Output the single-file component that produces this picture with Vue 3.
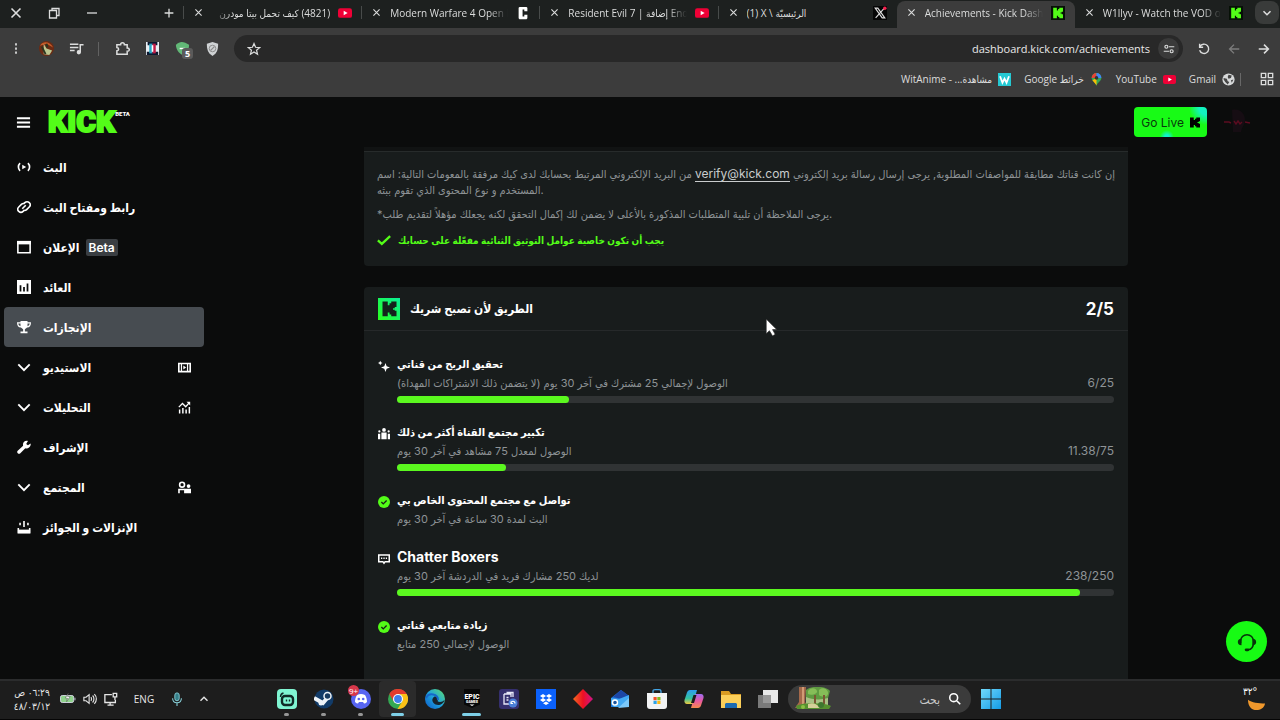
<template>
  <div class="desktop">
    <header class="browser">
      <div class="tab-strip">
        <div class="window-controls">
          <button v-for="c in windowControls" :key="c.icon" type="button" :aria-label="c.label">
            <svg viewBox="0 0 16 16" v-html="icons[c.icon]"></svg>
          </button>
        </div>
        <button class="new-tab" type="button" aria-label="New tab">
          <svg viewBox="0 0 16 16" v-html="icons.plus"></svg>
        </button>
        <div class="tabs">
          <div v-for="tab in tabs" :key="tab.title" class="tab" :class="{ active: tab.active }">
            <button type="button" class="tab-close" aria-label="Close tab">
              <svg viewBox="0 0 16 16" v-html="icons.close"></svg>
            </button>
            <span class="tab-title" :class="{ fade: tab.fade }" :dir="tab.dir">{{ tab.title }}</span>
            <svg class="favicon" viewBox="0 0 16 16" v-html="icons[tab.icon]"></svg>
          </div>
        </div>
        <button class="tab-search" type="button" aria-label="Search tabs">
          <svg viewBox="0 0 16 16" v-html="icons.chevronDown"></svg>
        </button>
      </div>

      <div class="toolbar">
        <div class="extensions">
          <button v-for="e in extensions" :key="e" type="button" :class="e" :aria-label="e">
            <svg viewBox="0 0 16 16" v-html="icons[e]"></svg>
            <span v-if="e === 'guard'" class="count">5</span>
          </button>
        </div>
        <div class="omnibox">
          <button type="button" aria-label="Bookmark">
            <svg viewBox="0 0 16 16" v-html="icons.star"></svg>
          </button>
          <input type="text" aria-label="Address" value="dashboard.kick.com/achievements" />
          <button type="button" class="site-info" aria-label="Site information">
            <svg viewBox="0 0 16 16" v-html="icons.tune"></svg>
          </button>
        </div>
        <div class="history">
          <button type="button" aria-label="Reload"><svg viewBox="0 0 16 16" v-html="icons.reload"></svg></button>
          <button type="button" aria-label="Forward" disabled><svg viewBox="0 0 16 16" v-html="icons.arrowLeft"></svg></button>
          <button type="button" aria-label="Back"><svg viewBox="0 0 16 16" v-html="icons.arrowRight"></svg></button>
        </div>
      </div>

      <nav class="bookmarks">
        <a v-for="b in bookmarks" :key="b.label" href="#">
          <span>{{ b.label }}</span>
          <svg viewBox="0 0 16 16" v-html="icons[b.icon]"></svg>
        </a>
        <button type="button" aria-label="Apps"><svg viewBox="0 0 16 16" v-html="icons.apps"></svg></button>
      </nav>
    </header>

    <div class="page">
      <header class="page-header">
        <button class="menu" type="button" aria-label="Menu">
          <svg viewBox="0 0 16 16" v-html="icons.menu"></svg>
        </button>
        <a class="logo" href="#">KICK<sup>BETA</sup></a>
        <button class="go-live" type="button">
          Go Live
          <svg viewBox="0 0 8 8"><path :d="kMark" /></svg>
        </button>
        <a class="avatar" href="#" aria-label="Profile">
          <svg viewBox="0 0 28 28">
            <path d="M9 2c7-2 13 3 13 10 0 5-3 6-4 12h-8z" fill="#160d13" />
            <path d="M1 14h5l2 1M11 13l2 3 2-3 2 3 2-2M22 14l5 1" fill="none" stroke="#5c0c20" stroke-width="1.4" />
          </svg>
        </a>
      </header>

      <div class="body">
        <nav class="sidebar">
          <a v-for="item in navItems" :key="item.label" href="#" :class="{ active: item.active }">
            <svg viewBox="0 0 16 16" v-html="icons[item.icon]"></svg>
            <span class="nav-label" dir="rtl">{{ item.label }}</span>
            <span v-if="item.badge" class="nav-badge">{{ item.badge }}</span>
            <svg v-if="item.trail" class="trail" viewBox="0 0 16 16" v-html="icons[item.trail]"></svg>
          </a>
        </nav>

        <main class="content">
          <section class="card notice">
            <p class="line" dir="rtl">
              إن كانت قناتك مطابقة للمواصفات المطلوبة, يرجى إرسال رسالة بريد إلكتروني
              <a href="mailto:verify@kick.com">verify@kick.com</a>
              من البريد الإلكتروني المرتبط بحسابك لدى كيك مرفقة بالمعومات التالية: اسم
            </p>
            <p class="line">المستخدم و نوع المحتوى الذي تقوم ببثه.</p>
            <p class="line hint">*يرجى الملاحظة أن تلبية المتطلبات المذكورة بالأعلى لا يضمن لك إكمال التحقق لكنه يجعلك مؤهلاً لتقديم طلب.</p>
            <p class="check">
              <svg viewBox="0 0 16 16" v-html="icons.check"></svg>
              <span>يجب أن تكون خاصية عوامل التوثيق الثنائية مفعّلة على حسابك</span>
            </p>
          </section>

          <section class="card">
            <header class="card-header">
              <svg viewBox="0 0 22 22">
                <defs>
                  <linearGradient id="partner" x1="0" y1="1" x2="1" y2="0">
                    <stop offset="0" stop-color="#2bff1c" />
                    <stop offset="1" stop-color="#08f09a" />
                  </linearGradient>
                </defs>
                <rect width="22" height="22" fill="url(#partner)" />
                <path :d="kMark" transform="translate(4.5 3.5) scale(1.75 1.85)" fill="#14221b" />
              </svg>
              <h2>الطريق لأن تصبح شريك</h2>
              <strong>2/5</strong>
            </header>
            <ul class="goals">
              <li v-for="goal in goals" :key="goal.title">
                <svg viewBox="0 0 16 16" v-html="icons[goal.icon]"></svg>
                <div class="goal">
                  <h3 :class="{ latin: goal.latin }">{{ goal.title }}</h3>
                  <div class="goal-row">
                    <p dir="rtl">{{ goal.text }}</p>
                    <span v-if="goal.max" class="score">{{ goal.value }}/{{ goal.max }}</span>
                  </div>
                  <div
                    v-if="goal.max"
                    class="bar"
                    role="progressbar"
                    :aria-label="goal.title"
                    :aria-valuenow="goal.value"
                    :aria-valuemax="goal.max"
                  >
                    <div class="fill" :style="{ width: percent(goal) }"></div>
                  </div>
                </div>
              </li>
            </ul>
          </section>
        </main>
      </div>

      <button class="support" type="button" aria-label="Support">
        <svg viewBox="0 0 24 24">
          <path d="M5 13v-2a7 7 0 0 1 14 0v2c0 5-2 7-6 7.500" fill="none" stroke="#06330a" stroke-width="1.700" />
          <path d="M6 8.500v7c-3 0-4-1.500-4-3.500s1-3.500 4-3.500zM18 8.500v7c3 0 4-1.500 4-3.500s-1-3.500-4-3.500z" fill="#06330a" />
          <rect x="9.500" y="19" width="5" height="3" rx="1.500" fill="#06330a" />
        </svg>
      </button>
    </div>

    <footer class="taskbar">
      <div class="tray">
        <time dir="rtl"><span>٠٦:٢٩ ص</span><span>٤٨/٠٣/١٢</span></time>
        <svg class="battery" viewBox="0 0 18 16" v-html="icons.battery"></svg>
        <svg viewBox="0 0 16 16" v-html="icons.volume"></svg>
        <svg viewBox="0 0 16 16" v-html="icons.network"></svg>
        <button class="lang" type="button">ENG</button>
        <svg viewBox="0 0 16 16" v-html="icons.mic"></svg>
        <button class="more" type="button" aria-label="Hidden icons">
          <svg viewBox="0 0 16 16" v-html="icons.chevronUp"></svg>
        </button>
      </div>
      <div class="apps">
        <button v-for="app in apps" :key="app.icon" type="button" :class="app.state" :aria-label="app.icon">
          <svg viewBox="0 0 20 20" v-html="icons[app.icon]"></svg>
          <span v-if="app.badge" class="app-badge">{{ app.badge }}</span>
        </button>
      </div>
      <label class="search">
        <svg class="scene" viewBox="0 0 38 24" v-html="icons.forest"></svg>
        <input type="text" placeholder="بحث" dir="rtl" aria-label="بحث" />
        <svg class="lens" viewBox="0 0 16 16" v-html="icons.search"></svg>
      </label>
      <button class="start" type="button" aria-label="Start">
        <svg viewBox="0 0 20 20" v-html="icons.windows"></svg>
      </button>
      <div class="weather">
        <span>٣٢°</span>
        <svg viewBox="0 0 20 20">
          <path d="M1 7c4 3 11 4 18 4-1 5-5 7-9 7-5 0-9-4-9-11z" fill="#f0982c" />
        </svg>
      </div>
    </footer>

    <svg class="cursor" viewBox="0 0 12 18">
      <path d="M1 1v14l3-3 3 5 2.500-1.500L7 11h4z" fill="#fff" stroke="#222" stroke-width=".6" />
    </svg>
  </div>
</template>

<script setup>
const kMark = 'M0 0h3v2h1V1h1V0h3v3H7v.6H6v.8h1V5h1v3H5V7H4V6H3v2H0z'

const line = (d, w = 1.4) => `<path d="${d}" fill="none" stroke="currentColor" stroke-width="${w}"/>`
const solid = (d) => `<path d="${d}" fill="currentColor" fill-rule="evenodd"/>`
const kick = `<rect width="16" height="16" fill="#061006"/><path d="${kMark}" transform="translate(2.500 2) scale(1.4 1.5)" fill="#53fc18"/>`

const icons = {
  close: line('M3.500 3.500l9 9M12.500 3.500l-9 9', 1.6),
  restore: line('M3.500 5.500h7V13h-7zM6 5.500V3.500h7V10.500h-2.500', 1.3),
  minimize: line('M3 8h10', 1.3),
  plus: line('M8 3v10M3 8h10', 1.5),
  chevronDown: line('M4 6l4 4 4-4', 1.8),
  chevronUp: line('M4 10l4-4 4 4', 1.6),
  youtube: '<rect y="2.500" width="16" height="11" rx="2.500" fill="#ef0036"/><path d="M6.500 5.500v5L11 8z" fill="#fff"/>',
  cod: '<path d="M4 1h8l1 1v4H9.500V4h-2v8h2v-2H13v4l-1 1H4l-1-1V2z" fill="#fff"/>',
  x: '<rect width="16" height="16" rx="1" fill="#050505"/><path d="M2.500 2.500h3l8 11h-3zM13 2.500l-10 11" fill="none" stroke="#ddd" stroke-width="1.300"/><circle cx="13.500" cy="2.500" r="2" fill="#f4214e"/>',
  kick,
  kebab: solid('M7 2h2v2.500H7zM7 6.800h2v2.500H7zM7 11.500h2V14H7z'),
  profile:
    '<circle cx="8" cy="8" r="8" fill="#6b2b14"/><path d="M1 5c4-6 11-4 14 2L8 3z" fill="#c65b28"/><path d="M5 3l3 5 6 2-3 5-6-1z" fill="#bcc68f"/><path d="M3 6l4 8M8 3l1 4" stroke="#2a3520" stroke-width="2"/>',
  playlist: line('M1 3.500h9M1 6.800h9M1 10h5M12 12V4h3.500', 1.6) + solid('M12.800 12a2.300 2.300 0 1 1-4.600 0 2.300 2.300 0 0 1 4.600 0z'),
  puzzle: line('M2 4h4c0-3 4-3 4 0h3v3.500c3 0 3 3.500 0 3.500v3H2v-3.500c2.500-.5 2.500-3 0-3.500z', 1.6),
  frame:
    '<rect width="16" height="16" fill="#e9eff4"/><path d="M2 0h12v4H2zM1 12h14v4H1z" fill="#0c1830"/><rect x="4" y="2" width="4" height="12" fill="#2aa6c4"/><rect x="8" y="2" width="4" height="12" fill="#c01b46"/><path d="M7 4h2v8H7z" fill="#fff"/>',
  guard: '<path d="M1 4c5-5 9-3 14 0 0 6-3 9-7 11-4-2-7-6-7-11z" fill="#62b877"/><path d="M5 8h6" stroke="#fff" stroke-width="1.500"/>',
  shield:
    '<path d="M2 3l6-2 6 2c0 6-1 10-6 13-5-3-6-7-6-13z" fill="#cfd2d4"/><circle cx="8" cy="8" r="3.500" fill="none" stroke="#888"/><path d="M6 10l4-4" stroke="#888" stroke-width="1.300"/>',
  star: line('M8 1.800l1.800 4.200 4.600.4-3.500 3 1.100 4.500L8 11.500l-4 2.400 1.100-4.500-3.500-3 4.600-.4z', 1.4),
  tune: line('M8 5h7M1 11h7', 1.6) + line('M6.500 5a2 2 0 1 1-4 0 2 2 0 0 1 4 0zM13.500 11a2 2 0 1 1-4 0 2 2 0 0 1 4 0z', 1.6),
  reload: line('M3.500 5A5.300 5.300 0 1 1 3 9.500M3 2v4h4', 1.6),
  arrowLeft: line('M14 8H3M8 3L3 8l5 5', 1.6),
  arrowRight: line('M2 8h11M8 3l5 5-5 5', 1.8),
  wit: '<rect width="16" height="16" fill="#25c9d3"/><path d="M2.500 4l3 8L8 7l2.500 5 3-8" fill="none" stroke="#fff" stroke-width="2.200"/>',
  maps:
    '<path d="M8 16C7 11 2 10 2 6a6 6 0 0 1 12 0c0 4-5 5-6 10z" fill="#34a853"/><path d="M2 6a6 6 0 0 1 6-6v6z" fill="#ea4335"/><path d="M8 0a6 6 0 0 1 6 6H8z" fill="#4285f4"/><path d="M3 9l5-3v9z" fill="#fbbc04"/><circle cx="8" cy="6" r="2.200" fill="#333"/>',
  globe: '<circle cx="8" cy="8" r="7.500" fill="#d7d9da"/><path d="M2 6l4 1 1 3 2 1-2 3-3-3-2-3zM8 2l4 1-1 3-3 1-1-2zM11 9l3-1-2 4z" fill="#454545"/>',
  apps: line('M1.500 1.500h5v5h-5zM9.500 1.500h5v5h-5zM1.500 9.500h5v5h-5zM9.500 9.500h5v5h-5z', 1.5),
  menu: line('M1 3.500h14M1 8h14M1 12.500h14', 2.2),
  stream: line('M3.500 3.500C1 6 1 10 3.500 12.500M12.500 3.500c2.500 2.500 2.500 6.500 0 9', 1.9) + solid('M6 5.500l4.500 2.500L6 10.500z'),
  link: line('M7.500 4.500L9 3a3.400 3.400 0 0 1 5 5l-3 3a3.400 3.400 0 0 1-3.500.8M8.500 11.500L7 13a3.400 3.400 0 0 1-5-5l3-3a3.400 3.400 0 0 1 3.500-.8M6 10l4-4', 1.8),
  ad: line('M1 2h14v12.500H1z', 1.8) + solid('M0 1h16v4H0z'),
  revenue: solid('M0 0h16v16H0zM3 6v7h2V6zM7 8v5h2V8zM11 4v9h2V4z'),
  trophy: solid('M4 1h8v1.500h4c0 4-1.500 6-4.500 6L9 10.500V13h3v2H4v-2h3v-2.500L4.500 8.500C1.500 8.500 0 6.500 0 2.500h4zM1.500 4c.2 1.600 1 2.600 2.500 3V4zM12 4v3c1.500-.4 2.300-1.400 2.500-3z'),
  chevron: line('M1.500 5L8 11.500 14.500 5', 2.2),
  studio: solid('M0 2h16v12H0zM2 4v8h1.500V4zM12.500 4v8H14V4zM5 4v8h6V4z') + solid('M6.500 5.500v5L10 8z'),
  analytics: line('M2 15.500v-5M6 15.500v-7M10 15.500v-5M14 15.500v-8', 1.8) + line('M1 7.500L5.500 3l4 4L14 2', 1.6) + solid('M10.500 1H15v4.500z'),
  wrench: solid('M15.500 4l-3 2-2-1.500L12.500 1C9 0 6 3 7 6.500L.5 12.500c-1 2 1 4 3 3L9.500 9.500c3 1 7-2 6-5.500z'),
  community: line('M8 4.500a3 3 0 1 1-6 0 3 3 0 0 1 6 0zM1.200 15V10.500H8', 2) + solid('M13 4a2.300 2.300 0 1 1 0 4.600A2.300 2.300 0 0 1 13 4zM7.500 9.500H16V15H7.500z'),
  drops: line('M1.500 9v5.500h13V9M8 1v7M3.500 3v3M12.500 3v3', 1.8) + solid('M1 11h14v4H1z'),
  check: '<path d="M1 8.500l4.500 4L15 3.500" fill="none" stroke="#53fc18" stroke-width="2.600"/>',
  sparkle: solid('M10 4l1.500 4.200L16 10l-4.500 1.800L10 16l-1.600-4.200L4 10l4.400-1.800zM3 1l1 2 2 1-2 1-1 2-1-2-2-1 2-1z'),
  group: solid('M8 0a2.500 2.500 0 1 1 0 5 2.500 2.500 0 0 1 0-5zM4.500 6h7v9h-7zM0 7.500h3V15H0zM13 7.500h3V15h-3zM1.800 3a1.500 1.500 0 1 1 0 3 1.500 1.500 0 0 1 0-3zM14.200 3a1.500 1.500 0 1 1 0 3 1.500 1.500 0 0 1 0-3z'),
  done: '<circle cx="8" cy="8" r="8" fill="#53fc18"/><path d="M4.500 8l2.500 2.500 4.500-4.500" fill="none" stroke="#182018" stroke-width="1.800"/>',
  chat: line('M1 2.500h14v9H9.500L8 13.500l-1.500-2H1z', 2) + solid('M4 6h1.700v2H4zM7.200 6h1.700v2H7.200zM10.400 6H12v2h-1.600z'),
  battery:
    '<rect x="1" y="4" width="15" height="8" rx="2" fill="#8fd18c" stroke="#dde" /><path d="M17.500 6.500v3" stroke="#dde"/><path d="M10 1L6.500 7H9l-1 4 4-6H9z" fill="#fff" stroke="#333" stroke-width=".5"/>',
  volume: line('M1 6h2.500L7 3v10l-3.500-3H1zM9 6c1 1 1 3 0 4M11 4c2 2 2 6 0 8M13 2.500c3 3 3 8 0 11', 1.3),
  network: line('M9 3H1v9h12V9M4 15h7M7 12v3M10.500 1.500h4v4h-4zM12.500 5.500V9', 1.5),
  mic: '<rect x="5.500" y="1" width="5" height="9" rx="2.500" fill="#357f89" stroke="#8ad3dc"/><path d="M3 7c0 7 10 7 10 0M8 12.500V16" fill="none" stroke="#8ad3dc" stroke-width="1.200"/>',
  search: line('M11 6.500a4.500 4.500 0 1 1-9 0 4.500 4.500 0 0 1 9 0zM9.700 9.700L14 14', 1.8),
  streamlabs:
    '<rect width="20" height="20" rx="4" fill="#80f5d2"/><rect x="5" y="7" width="11" height="9" rx="3" fill="none" stroke="#102a26" stroke-width="2.400"/><path d="M9.500 10.500v2M12.500 10.500v2M3.500 8c0-2 1-3.500 3-4" stroke="#102a26" stroke-width="1.400" fill="none"/>',
  steam:
    '<circle cx="10" cy="10" r="9.500" fill="#123b68"/><path d="M0 9l9 5 5-6" fill="none" stroke="#eef3f8" stroke-width="4"/><circle cx="13.500" cy="7" r="3.500" fill="#173a60" stroke="#eef3f8" stroke-width="1.500"/><circle cx="7" cy="14" r="2.500" fill="#eef3f8"/>',
  discord:
    '<circle cx="10" cy="10" r="10" fill="#5865f2"/><path d="M6 6c3-1.200 5-1.200 8 0 1.500 2.500 2 4.500 2 7-1 1-2 1.500-3 1.500l-1-1.500H8l-1 1.500c-1 0-2-.5-3-1.500 0-2.500.5-4.500 2-7z" fill="#fff"/><circle cx="7.800" cy="10" r="1.300" fill="#5865f2"/><circle cx="12.200" cy="10" r="1.300" fill="#5865f2"/>',
  chrome:
    '<circle cx="10" cy="10" r="10" fill="#34a853"/><path d="M1.300 5A10 10 0 0 1 18.700 5H10L5.700 12.500z" fill="#e33b2e"/><path d="M18.700 5A10 10 0 0 1 9.500 20l5-8L12 5z" fill="#fbc116"/><circle cx="10" cy="10" r="5" fill="#fff"/><circle cx="10" cy="10" r="3.900" fill="#3f7fee"/>',
  edge:
    '<defs><linearGradient id="eg" x1="0" y1="1" x2="1" y2="0"><stop stop-color="#0c59c8"/><stop offset=".5" stop-color="#1fa3dd"/><stop offset="1" stop-color="#5fe06a"/></linearGradient></defs><circle cx="10" cy="10" r="10" fill="url(#eg)"/><path d="M8 9c2-3 6-1 5 2-1 1 0 2 2 2 2 0 3-1 4.500-2C18 17 11 17 8.500 14 7 12 7 10 8 9z" fill="#17242e"/><path d="M1 9c3-6 12-4 12 2" fill="none" stroke="#1667c9" stroke-width="2"/>',
  epic:
    '<path d="M2 0h16v15.500L10 19l-8-3.500z" fill="#080808"/><text x="10" y="9.500" text-anchor="middle" font-family="Roboto, sans-serif" font-weight="900" font-size="7" fill="#fff">EPIC</text><text x="10" y="13.500" text-anchor="middle" font-family="Roboto, sans-serif" font-weight="900" font-size="3.500" fill="#fff">GAMES</text><path d="M7.500 15.500h5L10 17z" fill="#fff"/>',
  transfer:
    '<rect width="20" height="20" rx="3" fill="#352f6e"/><path d="M5 5h7v3M5 5v10h6M7.500 3.500H14V8M7.500 8.500h2M7.500 11h2" fill="none" stroke="#e8e8f8" stroke-width="1.300"/><circle cx="14" cy="14" r="4.500" fill="#4b7fd8"/><path d="M12 14.500c0-3 4-3 4 0M12 12.500v2h2" fill="none" stroke="#fff" stroke-width="1.100"/>',
  dropbox:
    '<rect width="20" height="20" fill="#0b61fb"/><path d="M7 5l3 2-3 2-3-2zM13 5l3 2-3 2-3-2zM7 9l3 2-3 2-3-2zM13 9l3 2-3 2-3-2zM10 12.500l3 1.700-3 1.800-3-1.800z" fill="#fff"/>',
  diamond:
    '<defs><linearGradient id="dm"><stop stop-color="#f26a21"/><stop offset=".5" stop-color="#ed1022"/><stop offset="1" stop-color="#d01488"/></linearGradient></defs><path d="M10 0l10 10-10 10L0 10z" fill="url(#dm)"/>',
  home:
    '<path d="M1 9L11 1l8 6v11H1z" fill="#1e73d8"/><path d="M3 8l8-7 8 6-7 3z" fill="#1c46a6"/><path d="M1 9l8 1 10-4v12H4l-3-3z" fill="#42a9f4"/><path d="M8 19L19 9v9z" fill="#7cc9fb"/><circle cx="5" cy="13.500" r="2.500" fill="#1b559f" stroke="#fff" stroke-width="1.400"/>',
  store:
    '<path d="M6 4V2.500C6 1 6.500.7 8 .7h4c1.500 0 2 .3 2 1.800V4" fill="none" stroke="#43a5e6" stroke-width="1.300"/><path d="M0 4h20v13a3 3 0 0 1-3 3H3a3 3 0 0 1-3-3z" fill="#f2f3f4"/><path d="M6.500 8h3.200v3.200H6.500z" fill="#f05128"/><path d="M10.300 8h3.200v3.200h-3.200z" fill="#7eb91b"/><path d="M6.500 11.800h3.200V15H6.500z" fill="#2ba2e8"/><path d="M10.300 11.800h3.200V15h-3.200z" fill="#fbb813"/>',
  copilot:
    '<defs><linearGradient id="ca" x1="0" y1="0" x2="0" y2="1"><stop stop-color="#2d9cf0"/><stop offset=".6" stop-color="#33c3a0"/><stop offset="1" stop-color="#f2c83c"/></linearGradient><linearGradient id="cb" x1="0" y1="0" x2="0" y2="1"><stop stop-color="#9d6cf2"/><stop offset=".5" stop-color="#e958a0"/><stop offset="1" stop-color="#f58a4c"/></linearGradient></defs><path d="M6 1h7l-4 14H3c-2 0-3-2-2.500-4L3 3.500C3.500 2 4.500 1 6 1z" fill="url(#ca)"/><path d="M14 19H7l4-14h6c2 0 3 2 2.500 4L17 16.500c-.5 1.500-1.500 2.500-3 2.500z" fill="url(#cb)"/><path d="M9.500 6h3L10 14H7z" fill="#1c1c1c"/>',
  folder: '<path d="M0 2h8l2 3h10v13H0z" fill="#d99b22"/><path d="M0 6h20v13H0z" fill="#fbcf5a"/><path d="M4 15l1-1h10l1 1v4H4z" fill="#1c6ab0"/>',
  taskview: '<path d="M5 1h15v13H5z" fill="#e9e9e9"/><path d="M0 6h13v13H0z" fill="#8b8b8b" fill-opacity=".85"/>',
  windows:
    '<defs><linearGradient id="wn" x1="0" y1="0" x2="1" y2="1"><stop stop-color="#71d9fb"/><stop offset="1" stop-color="#149be6"/></linearGradient></defs><path d="M0 0h9.500v9.500H0zM10.500 0H20v9.500h-9.500zM0 10.500h9.500V20H0zM10.500 10.500H20V20h-9.500z" fill="url(#wn)"/>',
  forest:
    '<path d="M5 0h7l-1 15 4 6H1l4-6z" fill="#a4694b"/><path d="M8 0h2v17H8z" fill="#d19a75"/><path d="M12 8h22v10H12z" fill="#a9c184"/><path d="M12 3c6-5 20-4 24 1l-2 7c-6 2-16 2-22-1z" fill="#5f9b41"/><path d="M14 4c3-4 8-3 9 0s-6 5-9 3zM25 3c4-4 10 0 9 4s-7 3-9 1z" fill="#86bd58"/><path d="M20 8h2v9h-2zM29 8h2v10h-2z" fill="#7b5633"/><path d="M2 19c8-4 28-3 35 0l-2 3H3z" fill="#56912f"/><path d="M14 17c5-2 9 0 12 4H14z" fill="#d6cf99"/><circle cx="27" cy="18" r="3" fill="#3f7830"/><circle cx="9" cy="20" r="2" fill="#8cc043"/>',
}

const windowControls = [
  { icon: 'close', label: 'Close' },
  { icon: 'restore', label: 'Restore' },
  { icon: 'minimize', label: 'Minimize' },
]

const tabs = [
  { title: '(4821) كيف تحمل بيتا مودرن', icon: 'youtube', dir: 'rtl', fade: true },
  { title: 'Modern Warfare 4 Open B', icon: 'cod', dir: 'ltr', fade: true },
  { title: 'Resident Evil 7 | إضافة End', icon: 'youtube', dir: 'ltr', fade: true },
  { title: '(1) X \\ الرئيسيّة', icon: 'x', dir: 'ltr' },
  { title: 'Achievements - Kick Dash', icon: 'kick', dir: 'ltr', fade: true, active: true },
  { title: 'W1llyv - Watch the VOD o', icon: 'kick', dir: 'ltr', fade: true },
]

const extensions = ['kebab', 'profile', 'playlist', 'puzzle', 'frame', 'guard', 'shield']

const bookmarks = [
  { label: 'WitAnime - ...مشاهدة', icon: 'wit' },
  { label: 'Google خرائط', icon: 'maps' },
  { label: 'YouTube', icon: 'youtube' },
  { label: 'Gmail', icon: 'globe' },
]

const navItems = [
  { label: 'البث', icon: 'stream' },
  { label: 'رابط ومفتاح البث', icon: 'link' },
  { label: 'الإعلان', icon: 'ad', badge: 'Beta' },
  { label: 'العائد', icon: 'revenue' },
  { label: 'الإنجازات', icon: 'trophy', active: true },
  { label: 'الاستيديو', icon: 'chevron', trail: 'studio' },
  { label: 'التحليلات', icon: 'chevron', trail: 'analytics' },
  { label: 'الإشراف', icon: 'wrench' },
  { label: 'المجتمع', icon: 'chevron', trail: 'community' },
  { label: 'الإنزالات و الجوائز', icon: 'drops' },
]

const goals = [
  {
    title: 'تحقيق الربح من قناتي',
    text: 'الوصول لإجمالي 25 مشترك في آخر 30 يوم (لا يتضمن ذلك الاشتراكات المهداة)',
    icon: 'sparkle',
    value: 6,
    max: 25,
  },
  { title: 'تكبير مجتمع القناة أكثر من ذلك', text: 'الوصول لمعدل 75 مشاهد في آخر 30 يوم', icon: 'group', value: 11.38, max: 75 },
  { title: 'تواصل مع مجتمع المحتوى الخاص بي', text: 'البث لمدة 30 ساعة في آخر 30 يوم', icon: 'done' },
  { title: 'Chatter Boxers', text: 'لديك 250 مشارك فريد في الدردشة آخر 30 يوم', icon: 'chat', value: 238, max: 250, latin: true },
  { title: 'زيادة متابعي قناتي', text: 'الوصول لإجمالي 250 متابع', icon: 'done' },
]

const percent = (goal) => `${(goal.value / goal.max) * 100}%`

const apps = [
  { icon: 'streamlabs', state: 'running' },
  { icon: 'steam', state: 'running' },
  { icon: 'discord', state: 'running', badge: '9+' },
  { icon: 'chrome', state: 'focused' },
  { icon: 'edge' },
  { icon: 'epic', state: 'open' },
  { icon: 'transfer' },
  { icon: 'dropbox' },
  { icon: 'diamond' },
  { icon: 'home' },
  { icon: 'store' },
  { icon: 'copilot' },
  { icon: 'folder' },
  { icon: 'taskview' },
]
</script>

<style>
body {
  margin: 0;
  background: #0b0c0c;
}
</style>

<style scoped>
.desktop {
  position: relative;
  display: flex;
  flex-direction: column;
  height: 100vh;
  overflow: hidden;
  color: #fff;
  font-family: 'Open Sans', 'DejaVu Sans Condensed', 'DejaVu Sans', sans-serif;
  font-size: 10px;
}

button {
  display: flex;
  align-items: center;
  justify-content: center;
  flex: none;
  margin: 0;
  padding: 0;
  border: 0;
  background: none;
  color: inherit;
  font: inherit;
}

a {
  color: inherit;
  text-decoration: none;
}

svg {
  display: block;
  flex: none;
  width: 14px;
  height: 14px;
}

input {
  min-width: 0;
  padding: 0;
  border: 0;
  outline: 0;
  background: none;
  color: inherit;
  font: inherit;
}

h2,
h3,
p,
ul {
  margin: 0;
  padding: 0;
}

/* browser chrome */
.browser {
  flex: none;
  background: #3c3c3c;
  color: #dcdddd;
}

.tab-strip {
  display: flex;
  height: 28px;
  background: #1d201f;
}

.window-controls {
  display: flex;
  align-items: center;
  gap: 22px;
  width: 153px;
  height: 25px;
  padding-left: 8px;
  box-sizing: border-box;
}

.window-controls svg {
  width: 16px;
  height: 16px;
}

.new-tab {
  width: 31px;
  height: 25px;
}

.tabs {
  display: flex;
  flex: 1;
  min-width: 0;
}

.tab {
  position: relative;
  display: flex;
  flex: 1;
  align-items: center;
  gap: 8px;
  min-width: 0;
  height: 25px;
  padding: 0 10px 0 9px;
  margin-bottom: 3px;
}

.tab::before {
  content: '';
  position: absolute;
  left: -1px;
  top: 6px;
  width: 1px;
  height: 13px;
  background: #484b4a;
}

.tab.active {
  height: 27px;
  margin: 1px 0 0;
  border-radius: 8px 8px 0 0;
  background: #3c3c3c;
}

.tab.active::before,
.tab.active + .tab::before {
  display: none;
}

.tab.active > * {
  margin-bottom: 4px;
}

.tab-close svg {
  width: 11px;
  height: 11px;
}

.tab-title {
  flex: 1;
  min-width: 0;
  overflow: hidden;
  white-space: nowrap;
}

.tab-title.fade {
  mask-image: linear-gradient(to right, #000 84%, transparent);
}

.tab-title.fade[dir='rtl'] {
  mask-image: linear-gradient(to left, #000 84%, transparent);
}

.tab-search {
  width: 24px;
  height: 23px;
  margin: 1px 1px 0 2px;
  border-radius: 8px;
  background: #393b3a;
}

.toolbar {
  display: flex;
  align-items: center;
  height: 41px;
}

.extensions {
  display: flex;
  align-items: center;
  gap: 14px;
  padding: 0 14px 0 8px;
}

.extensions button {
  position: relative;
  width: 16px;
  height: 16px;
}

.extensions svg {
  width: 15px;
  height: 15px;
}

.extensions .kebab svg {
  width: 14px;
}

.extensions .puzzle {
  margin-left: 16px;
}

.extensions .puzzle::before {
  content: '';
  position: absolute;
  left: -16px;
  top: 1px;
  width: 1px;
  height: 14px;
  background: #626262;
}

.extensions .frame svg {
  width: 13px;
  height: 13px;
}

.count {
  position: absolute;
  left: 8px;
  top: 7px;
  padding: 0 3px;
  border-radius: 3px;
  background: #5a5a5a;
  color: #fff;
  font-size: 9px;
  font-weight: 700;
  line-height: 11px;
}

.omnibox {
  display: flex;
  flex: 1;
  align-items: center;
  height: 27px;
  padding: 0 4px 0 13px;
  border-radius: 14px;
  background: #282828;
}

.omnibox input {
  flex: 1;
  color: #e8e8e8;
  font-size: 11px;
  line-height: 20px;
  text-align: right;
}

.site-info {
  width: 21px;
  height: 21px;
  margin-left: 8px;
  border-radius: 50%;
  background: #3a3a3a;
}

.site-info svg {
  width: 12px;
  height: 12px;
}

.history {
  display: flex;
  gap: 16px;
  padding: 0 9px 0 14px;
}

.history button:disabled {
  color: #7c7c7c;
}

.bookmarks {
  display: flex;
  align-items: center;
  justify-content: flex-end;
  gap: 13px;
  height: 28px;
  padding: 0 6px 8px 0;
  box-sizing: border-box;
}

.bookmarks a {
  display: flex;
  align-items: center;
  gap: 6px;
}

.bookmarks a svg {
  width: 13px;
  height: 13px;
}

.bookmarks button {
  padding-left: 12px;
  margin-left: -8px;
}

.bookmarks button::before {
  content: '';
  width: 1px;
  height: 13px;
  margin: 0 19px 0 -12px;
  background: #686868;
}

/* dashboard */
.page {
  position: relative;
  display: flex;
  flex: 1;
  flex-direction: column;
  min-height: 0;
  background: #0b0c0c;
  font-family: Inter, 'DejaVu Sans Condensed', 'DejaVu Sans', sans-serif;
  font-size: 11px;
}

.page-header {
  display: flex;
  flex: none;
  align-items: center;
  height: 50px;
  padding: 0 29px 0 16px;
}

.menu svg {
  width: 15px;
  height: 15px;
}

.logo {
  display: flex;
  margin-left: 17px;
  color: #53fc18;
  font-family: Roboto, sans-serif;
  font-size: 30px;
  font-weight: 900;
  line-height: 30px;
  -webkit-text-stroke: 2px #53fc18;
}

.logo sup {
  margin-top: 4px;
  color: #fff;
  font-size: 6px;
  line-height: 6px;
  -webkit-text-stroke: 0;
}

.go-live {
  gap: 6px;
  height: 30px;
  margin-left: auto;
  padding: 0 7px;
  border-radius: 4px;
  background:
    radial-gradient(circle at 100% 0, #12f3c0 0 8px, transparent 18px),
    radial-gradient(circle at 45% 100%, #10f4cf 0 2px, transparent 7px),
    #18fb16;
  color: #083a0b;
  font-size: 12px;
}

.go-live svg {
  width: 10px;
  height: 11px;
}

.avatar {
  margin-left: 16px;
}

.avatar svg {
  width: 28px;
  height: 28px;
}

.body {
  display: flex;
  flex: 1;
  min-height: 0;
}

.sidebar {
  flex: none;
  width: 200px;
  padding: 0 8px 0 4px;
}

.sidebar a {
  display: flex;
  align-items: center;
  height: 40px;
  padding: 0 13px;
  border-radius: 4px;
}

.sidebar a.active {
  background: #474c51;
}

.nav-label {
  margin-left: 12px;
  font-size: 12px;
  font-weight: 700;
}

.nav-badge {
  margin-left: 6px;
  padding: 0 3px;
  border-radius: 2px;
  background: #3a3e42;
  font-size: 12px;
  font-weight: 600;
  line-height: 17px;
}

.sidebar .trail {
  width: 13px;
  height: 13px;
  margin-left: auto;
}

.content {
  flex: 1;
  min-width: 0;
  overflow: hidden;
}

.card {
  max-width: 764px;
  margin: 0 auto 21px;
  border-radius: 4px;
  background: #181c1c;
}

.notice {
  height: 119px;
  padding: 15px 13px 0;
  box-sizing: border-box;
  border-top: 4px solid #111313;
  border-radius: 0 0 4px 4px;
  box-shadow: inset 0 1px #272b2b;
  color: #8e9396;
}

.line {
  line-height: 16px;
  text-align: left;
  white-space: nowrap;
}

.line a {
  border-bottom: 1px solid #c9cccd;
  color: #c9cccd;
  font-size: 12px;
}

.hint {
  margin-top: 8px;
}

.check {
  display: flex;
  align-items: center;
  gap: 7px;
  margin-top: 10px;
  color: #53fc18;
  font-size: 10px;
  font-weight: 700;
  line-height: 16px;
}

.card-header {
  display: flex;
  align-items: center;
  height: 43px;
  padding: 0 14px;
  border-bottom: 1px solid #26292a;
}

.card-header svg {
  width: 22px;
  height: 22px;
}

.card-header h2 {
  margin-left: 10px;
  font-size: 12px;
  font-weight: 700;
}

.card-header strong {
  margin-left: auto;
  font-size: 17px;
  font-weight: 700;
}

.goals {
  padding: 23px 14px;
  list-style: none;
}

.goals li {
  display: flex;
  gap: 7px;
  margin-bottom: 19px;
}

.goals li > svg {
  width: 12px;
  height: 12px;
  margin-top: 6px;
}

.goal {
  flex: 1;
}

.goal h3 {
  font-size: 11px;
  font-weight: 700;
  line-height: 20px;
}

.goal h3.latin {
  font-size: 14px;
}

.goal-row {
  display: flex;
  justify-content: space-between;
  color: #8e9396;
  line-height: 18px;
}

.score {
  font-size: 12px;
}

.bar {
  height: 7px;
  margin-top: 4px;
  border-radius: 4px;
  background: #303334;
}

.fill {
  height: 100%;
  border-radius: 4px;
  background: #5bf81f;
}

.support {
  position: absolute;
  right: 13px;
  bottom: 17px;
  width: 41px;
  height: 41px;
  border-radius: 50%;
  background: #17fb14;
}

.support svg {
  width: 22px;
  height: 22px;
}

/* taskbar */
.taskbar {
  display: flex;
  flex: none;
  align-items: center;
  height: 41px;
  padding-bottom: 2px;
  border-top: 2px solid #2b2c2d;
  border-bottom: 1px solid #050505;
  box-sizing: border-box;
  background: #1d1d1d;
}

.tray {
  display: flex;
  align-items: center;
  gap: 7px;
  width: 268px;
  padding-left: 12px;
  box-sizing: border-box;
  color: #e6e6e6;
}

.tray time {
  display: flex;
  flex-direction: column;
  align-items: center;
  width: 40px;
  line-height: 14px;
}

.tray .battery {
  width: 17px;
}

.lang {
  width: 22px;
  margin: 0 8px;
}

.more {
  margin-left: 6px;
}

.apps {
  display: flex;
}

.apps button {
  position: relative;
  width: 37px;
  height: 36px;
  border-radius: 4px;
}

.apps svg,
.start svg {
  width: 20px;
  height: 20px;
}

.apps button::after {
  position: absolute;
  bottom: 1px;
  height: 3px;
  border-radius: 2px;
}

.apps .running::after {
  content: '';
  width: 5px;
  background: #969696;
}

.apps .focused {
  background: #2b2b2b;
}

.apps .focused::after {
  content: '';
  width: 13px;
  background: #7fd0e8;
}

.apps .open::after {
  content: '';
  width: 19px;
  background: #7fd0e8;
}

.app-badge {
  position: absolute;
  left: 6px;
  top: 4px;
  padding: 0 1px;
  border-radius: 6px;
  background: #d8384b;
  font-size: 8px;
  line-height: 11px;
}

.search {
  display: flex;
  align-items: center;
  width: 183px;
  height: 28px;
  margin-left: 2px;
  padding: 0 9px 0 6px;
  box-sizing: border-box;
  border-radius: 14px;
  background: #3b3b3b;
}

.scene {
  width: 38px;
  height: 24px;
}

.search input {
  flex: 1;
  margin-right: 8px;
  font-size: 12px;
}

.search input::placeholder {
  color: #c9c9c9;
  opacity: 1;
}

.start {
  margin-left: 10px;
}

.weather {
  display: flex;
  flex-direction: column;
  width: 23px;
  margin: 0 14px 0 auto;
  line-height: 11px;
}

.weather svg {
  align-self: flex-end;
  width: 19px;
  height: 19px;
  margin-top: -4px;
}

.cursor {
  position: absolute;
  left: 765px;
  top: 318px;
  width: 13px;
  height: 19px;
}
</style>
